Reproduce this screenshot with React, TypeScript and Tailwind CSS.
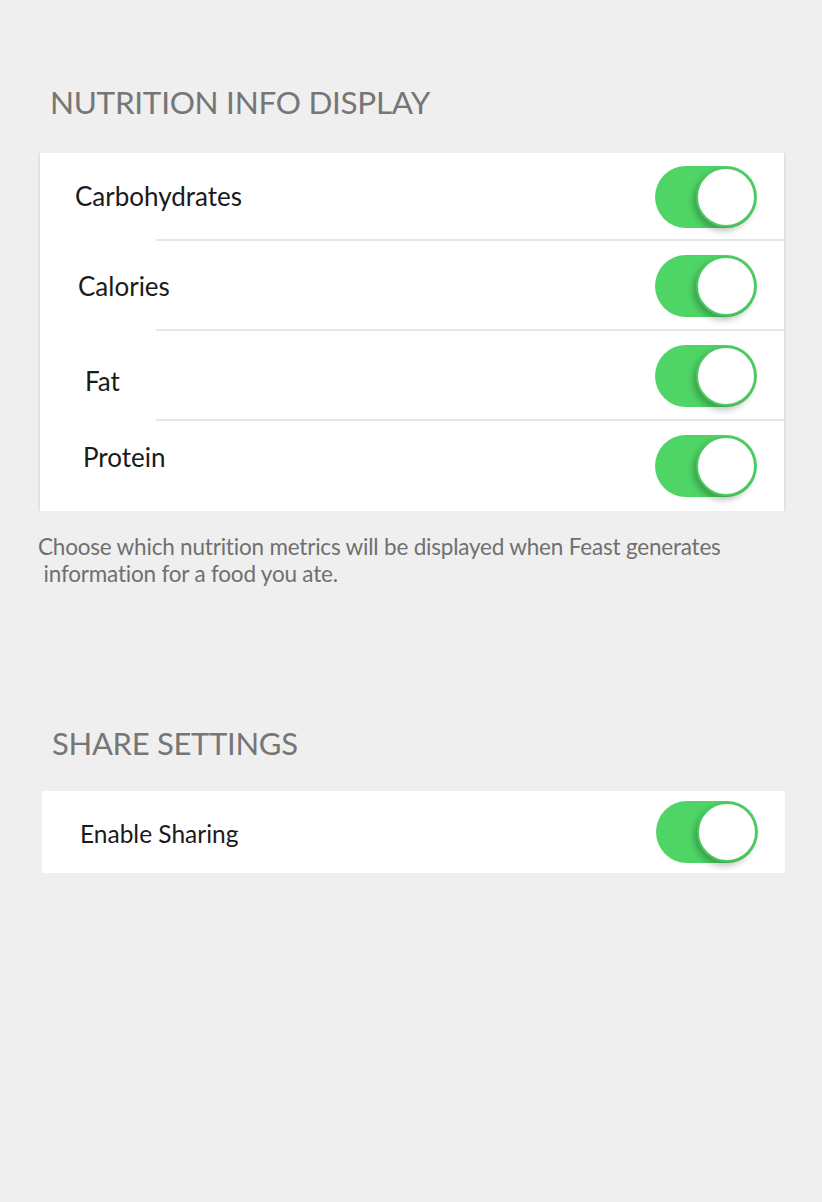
import React from "react";

function Toggle() {
  return (
    <div className="relative w-[102px] h-[62px] rounded-full bg-[#4fd566] shrink-0">
      <div className="absolute right-[1px] top-[1px] w-[60px] h-[60px] rounded-full bg-white border-[2px] border-[#4cc963] shadow-[-3px_4px_6px_rgba(0,0,0,0.25)]" />
    </div>
  );
}

type Row = { label: string; pl: string; mt: string; divider: boolean };

const rows: Row[] = [
  { label: "Carbohydrates", pl: "pl-[35px]", mt: "mt-[-2px]", divider: true },
  { label: "Calories", pl: "pl-[38px]", mt: "mt-[0px]", divider: true },
  { label: "Fat", pl: "pl-[45px]", mt: "mt-[10px]", divider: true },
  { label: "Protein", pl: "pl-[43px]", mt: "mt-[-18px]", divider: false },
];

export default function App() {
  return (
    <div
      className="w-[822px] h-[1202px] bg-[#efefef] overflow-hidden"
      style={{ fontFamily: "Lato, 'Open Sans', sans-serif" }}
    >
      <div className="pt-[84px] pl-[50px]">
        <h2 className="text-[31.5px] leading-[37px] text-[#767676] tracking-[-0.3px]">
          NUTRITION INFO DISPLAY
        </h2>
      </div>
      <div className="ml-[38px] mt-[32px] w-[748px] bg-white border-l-[2px] border-r-[2px] border-[#e2e2e2]">
        {rows.map((r, i) => (
          <div key={i} className="relative h-[90px] first:h-[88px] flex items-center justify-between pr-[27px]">
            <span className={`${r.pl} ${r.mt} text-[26px] text-[#1a1a1a]`}>{r.label}</span>
            <Toggle />
            {r.divider && (
              <div className="absolute left-[116px] right-0 bottom-0 h-[2px] bg-[#e6e6e6]" />
            )}
          </div>
        ))}
      </div>
      <p className="ml-[38px] mt-[22px] text-[22.5px] leading-[27px] text-[#6f6f6f] whitespace-pre tracking-[-0.2px]">
        {"Choose which nutrition metrics will be displayed when Feast generates\n information for a food you ate."}
      </p>
      <h2 className="ml-[52px] mt-[138px] text-[31px] leading-[36px] text-[#767676] tracking-[-0.3px]">
        SHARE SETTINGS
      </h2>
      <div className="ml-[42px] mt-[30px] w-[743px] h-[82px] bg-white flex items-center justify-between pr-[27px]">
        <span className="pl-[38px] mt-[4px] text-[24.5px] text-[#1a1a1a]">Enable Sharing</span>
        <Toggle />
      </div>
    </div>
  );
}
